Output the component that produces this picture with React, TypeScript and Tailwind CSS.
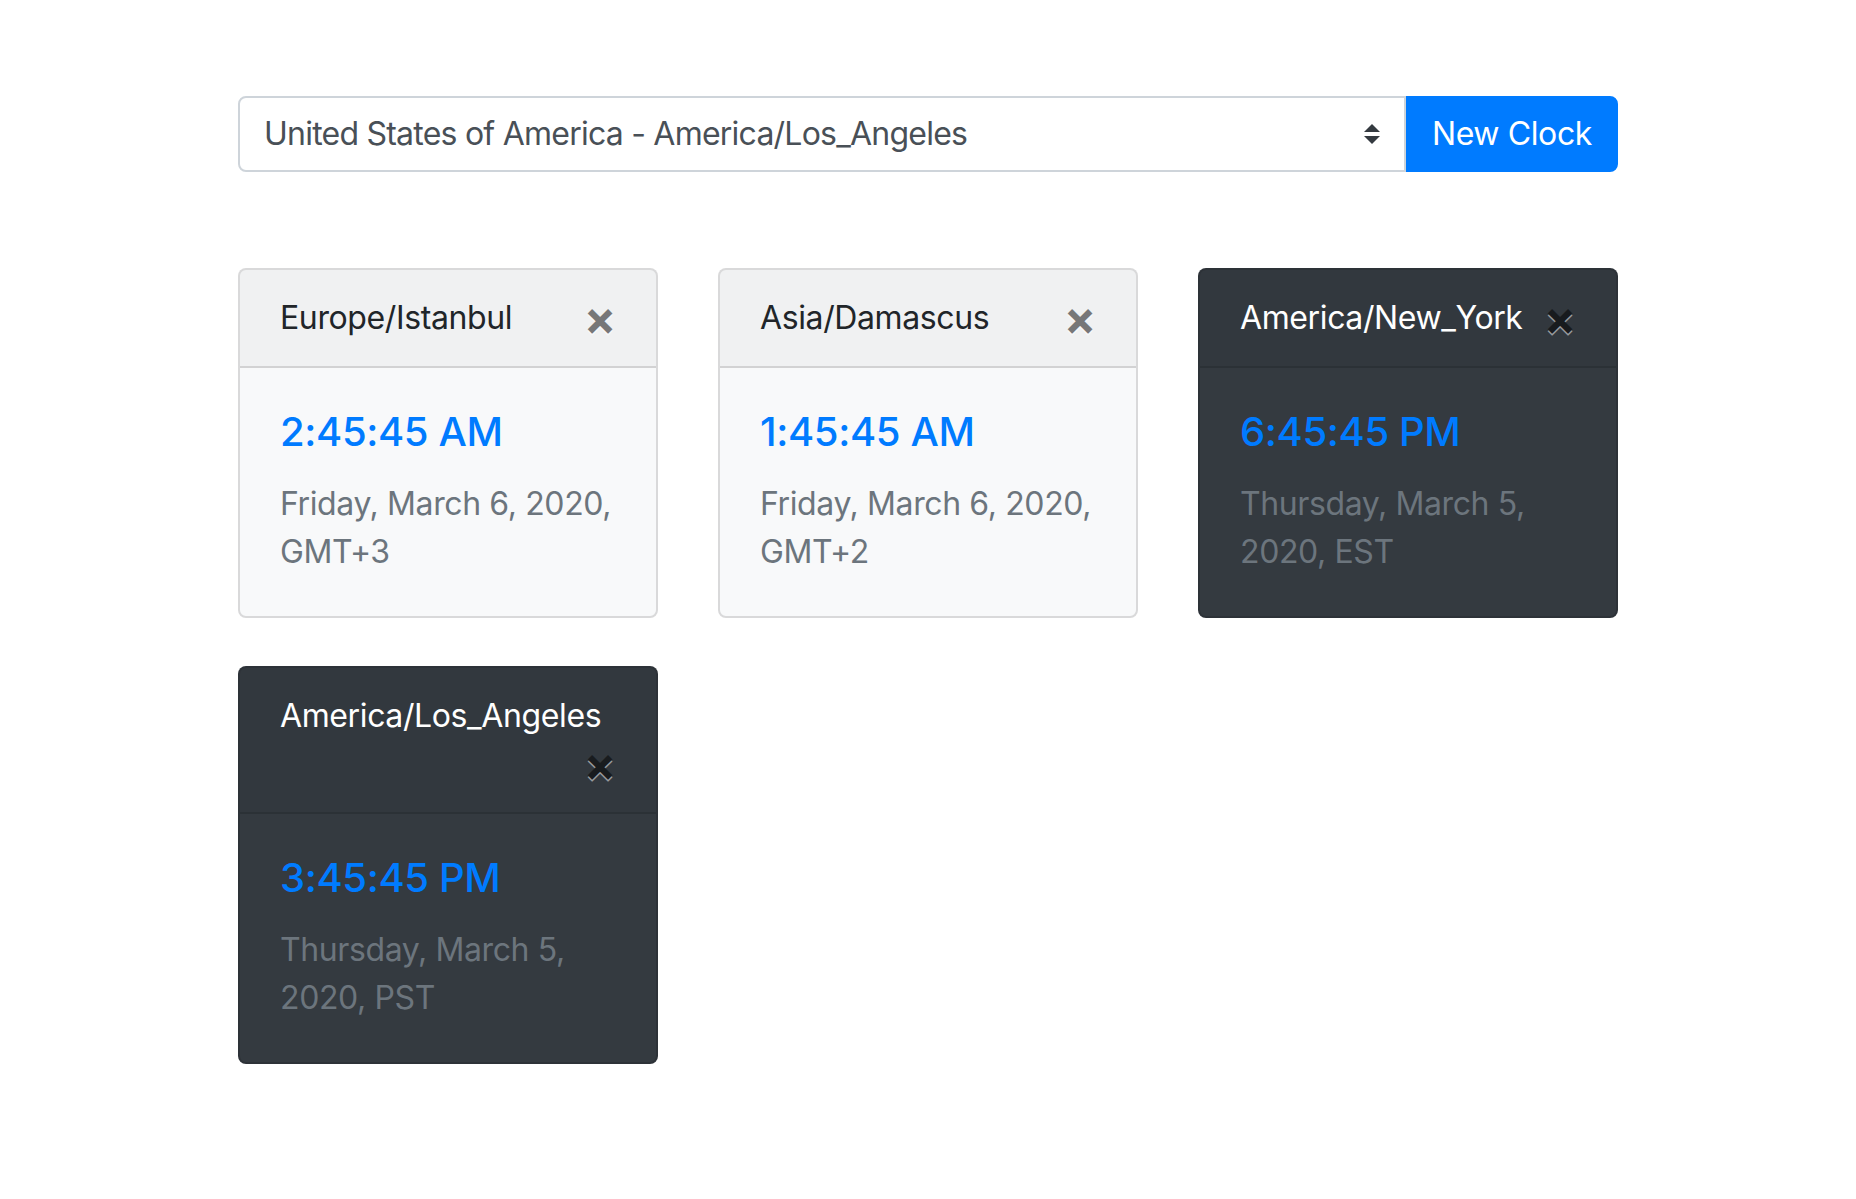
import React from 'react';

interface Clock {
  zone: string;
  time: string;
  date: string;
  dark?: boolean;
}

const clocks: Clock[] = [
  { zone: 'Europe/Istanbul', time: '2:45:45 AM', date: 'Friday, March 6, 2020, GMT+3' },
  { zone: 'Asia/Damascus', time: '1:45:45 AM', date: 'Friday, March 6, 2020, GMT+2' },
  { zone: 'America/New_York', time: '6:45:45 PM', date: 'Thursday, March 5, 2020, EST', dark: true },
  { zone: 'America/Los_Angeles', time: '3:45:45 PM', date: 'Thursday, March 5, 2020, PST', dark: true },
];

const ClockCard = ({ clock }: { clock: Clock }) => {
  const dark = clock.dark;
  return (
    <div
      className={`rounded-[8px] border-2 border-[rgba(0,0,0,0.125)] overflow-hidden ${
        dark ? 'bg-[#343a40] text-white' : 'bg-[#f8f9fa] text-[#212529]'
      }`}
    >
      {/* header */}
      <div className="flex flex-wrap items-start px-[40px] py-[24px] bg-[rgba(0,0,0,0.03)] border-b-2 border-[rgba(0,0,0,0.125)]">
        <span className="text-[32px] leading-[48px]">{clock.zone}</span>
        <button
          className="ml-auto h-[48px] text-[48px] leading-none font-bold text-black opacity-50 [text-shadow:0_2px_0_#fff]"
          type="button"
        >
          ×
        </button>
      </div>
      {/* body */}
      <div className="p-[40px]">
        <h5 className="text-[40px] leading-[48px] font-medium text-[#007bff] mb-[24px]">{clock.time}</h5>
        <p className="text-[32px] leading-[48px] text-[#6c757d]">{clock.date}</p>
      </div>
    </div>
  );
};

const App = () => {
  return (
    <div className="min-h-screen bg-white font-['Inter','Noto_Sans',sans-serif] tracking-[-0.024em]">
      <div className="w-[1380px] mx-auto pt-[96px] pb-[96px]">
        {/* picker */}
        <div className="flex">
          <div className="relative flex-1">
            <select
              className="w-full h-[76px] appearance-none rounded-l-[8px] border-2 border-[#ced4da] bg-white pl-[24px] pr-[56px] text-[32px] leading-[48px] text-[#495057] tracking-[-0.024em] outline-none"
              defaultValue="la"
            >
              <option value="la">United States of America - America/Los_Angeles</option>
            </select>
            <svg
              className="absolute right-[26px] top-1/2 -translate-y-1/2 pointer-events-none"
              width="16"
              height="20"
              viewBox="0 0 4 5"
            >
              <path d="M2 0L0 2h4zm0 5L0 3h4z" fill="#343a40" />
            </svg>
          </div>
          <button
            type="button"
            className="h-[76px] px-[24px] rounded-r-[8px] bg-[#007bff] border-2 border-[#007bff] text-white text-[32px] leading-[48px]"
          >
            New Clock
          </button>
        </div>

        {/* clocks */}
        <div className="grid grid-cols-3 gap-x-[60px] gap-y-[48px] mt-[96px] items-start">
          {clocks.map((c) => (
            <ClockCard key={c.zone} clock={c} />
          ))}
        </div>
      </div>
    </div>
  );
};

export default App;
